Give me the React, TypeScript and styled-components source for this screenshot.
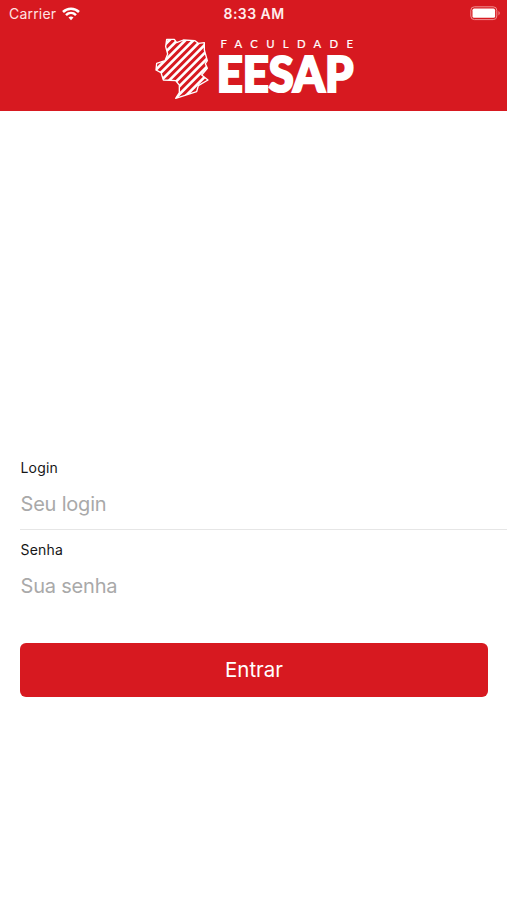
import React from "react";
import styled, { createGlobalStyle } from "styled-components";

const RED = "#d71920";

const GlobalStyle = createGlobalStyle`
  * { box-sizing: border-box; }
  body { margin: 0; background: #fff; font-family: Inter, "Liberation Sans", sans-serif; }
`;

const Screen = styled.main`
  display: flex;
  flex-direction: column;
  width: 100%;
  height: 900px;
  background: #fff;
  overflow: hidden;
`;

const Header = styled.header`
  flex: none;
  height: 111px;
  background: ${RED};
  color: #fff;
`;

const StatusBar = styled.div`
  display: grid;
  grid-template-columns: 1fr auto 1fr;
  align-items: center;
  height: 27px;
  padding: 0 6px 0 9px;
`;

const Carrier = styled.div`
  display: flex;
  align-items: center;
  gap: 6px;
  font-size: 14px;
  letter-spacing: 0.2px;
  color: #ffe3e3;
`;

const Clock = styled.div`
  margin-left: -2px;
  font-size: 14px;
  font-weight: 600;
  letter-spacing: 0.45px;
  color: #ffecec;
`;

const BatterySlot = styled.div`
  display: flex;
  justify-content: flex-end;
`;

const Logo = styled.svg`
  display: block;
  width: 207px;
  height: 70px;
  margin: 5px auto 0;
  overflow: visible;
`;

const Form = styled.form`
  display: flex;
  flex-direction: column;
  padding: 346px 0 0 20px;
`;

const Field = styled.label<{ $divided?: boolean }>`
  display: flex;
  flex-direction: column;
  height: ${(p) => (p.$divided ? 73 : 82)}px;
  border-bottom: ${(p) => (p.$divided ? "1px solid #e6e6e6" : "0")};
  margin-bottom: ${(p) => (p.$divided ? 9 : 22)}px;
`;

const Caption = styled.span`
  padding-left: 0.5px;
  font-size: 14px;
  line-height: 22px;
  letter-spacing: 0.2px;
  color: #161616;
`;

const Input = styled.input`
  height: 30px;
  margin-top: 10px;
  padding: 0 0 0 0.5px;
  border: 0;
  outline: 0;
  background: transparent;
  font: 400 20px/30px Inter, "Liberation Sans", sans-serif;
  letter-spacing: -0.2px;
  color: #161616;
  &::placeholder { color: #a9a9a9; opacity: 1; }
`;

const Submit = styled.button`
  height: 54px;
  margin-right: 19px;
  padding: 0 0 2px;
  border: 0;
  border-radius: 6px;
  background: ${RED};
  color: #fff;
  font: 400 20.5px Inter, "Liberation Sans", sans-serif;
`;

const OUTLINE =
  "M65 28 L88 28 L95 38 L115 30 L150 32 L160 40 L178 38 L178 60 L187 92 L181 101 L187 115 L170 135 L189 150 L160 167 L155 185 L92 205 L103 188 L103 165 L92 152 L55 150 L48 128 L33 120 L35 100 L60 92 L68 72 L62 50 Z";

const STRIPES = Array.from({ length: 11 }, (_, i) => 104 + i * 24);

function WifiIcon() {
  return (
    <svg width="18" height="14" viewBox="0 0 18 14" fill="none" stroke="#fff" strokeWidth="2.5">
      <path d="M1 5 C5.4 0.6 12.6 0.6 17 5" />
      <path d="M4 8.2 C6.9 5.4 11.1 5.4 14 8.2" />
      <path d="M6.5 10.6 Q9 8.6 11.5 10.6 L9 13.2 Z" fill="#fff" stroke="none" />
    </svg>
  );
}

function BatteryIcon() {
  return (
    <svg width="31" height="15" viewBox="0 0 31 15">
      <rect x="0.8" y="0.8" width="26" height="12.8" rx="3.6" fill="none" stroke="#f08f92" />
      <rect x="2.5" y="2.6" width="22.6" height="9.2" rx="1.6" fill="#fff" />
      <path d="M28.5 5 Q31 7.2 28.5 9.5 Z" fill="#f08f92" />
    </svg>
  );
}

function BrandLogo() {
  return (
    <Logo viewBox="150 32 207 70" role="img" aria-label="Faculdade EESAP">
      <defs>
        <clipPath id="region">
          <path d={OUTLINE} />
        </clipPath>
      </defs>
      <g transform="translate(145 30) scale(0.33333)">
        <g clipPath="url(#region)" stroke="#fff" strokeWidth="8">
          {STRIPES.map((s) => (
            <path key={s} d={`M${s - 225} 225 L${s} 0`} />
          ))}
        </g>
        <path d={OUTLINE} fill="none" stroke="#fff" strokeWidth="4" strokeLinejoin="round" />
      </g>
      <text x="220.5" y="48.3" fontFamily="Lato, sans-serif" fontSize="11.3" fill="#fff" stroke="#fff" strokeWidth="0.2" textLength="132.5" lengthAdjust="spacing">
        FACULDADE
      </text>
      <text x="216.8" y="91.8" fontFamily="Lato, sans-serif" fontWeight="900" fontSize="48.5" fill="#fff" stroke="#fff" strokeWidth="2.2" textLength="136.5" lengthAdjust="spacingAndGlyphs">
        EESAP
      </text>
    </Logo>
  );
}

export default function App() {
  return (
    <>
      <GlobalStyle />
      <Screen>
        <Header>
          <StatusBar>
            <Carrier>
              Carrier
              <WifiIcon />
            </Carrier>
            <Clock>8:33 AM</Clock>
            <BatterySlot>
              <BatteryIcon />
            </BatterySlot>
          </StatusBar>
          <BrandLogo />
        </Header>
        <Form onSubmit={(e) => e.preventDefault()}>
          <Field $divided>
            <Caption>Login</Caption>
            <Input type="text" placeholder="Seu login" />
          </Field>
          <Field>
            <Caption>Senha</Caption>
            <Input type="password" placeholder="Sua senha" />
          </Field>
          <Submit type="submit">Entrar</Submit>
        </Form>
      </Screen>
    </>
  );
}
